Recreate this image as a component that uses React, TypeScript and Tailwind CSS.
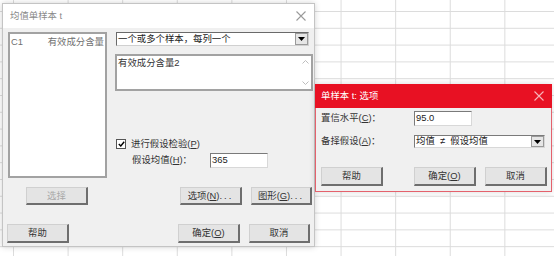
import React from "react";

const font = "font-['Liberation_Sans','Noto_Sans_CJK_SC',sans-serif]";

function Btn({
  children,
  w = "w-[62px]",
  h = "h-[19px]",
  disabled = false,
}: {
  children: React.ReactNode;
  w?: string;
  h?: string;
  disabled?: boolean;
}) {
  return (
    <div
      className={`${w} ${h} flex items-center justify-center border-t border-l border-[#d0d0d0] border-r-2 border-b-2 border-r-[#6e6e6e] border-b-[#6e6e6e] bg-[#e4e4e4] text-[9.4px] leading-none ${
        disabled ? "text-[#a8a8a8]" : "text-[#333]"
      }`}
    >
      {children}
    </div>
  );
}

function Arrow() {
  return (
    <div className="flex h-full w-[13px] items-center justify-center border border-[#9a9a9a] bg-[#e6e6e6]">
      <svg width="7" height="4" viewBox="0 0 7 4">
        <path d="M0 0h7L3.5 4z" fill="#000" />
      </svg>
    </div>
  );
}

function CloseX({ color }: { color: string }) {
  return (
    <svg width="10" height="10" viewBox="0 0 10 10">
      <path d="M0.5 0.5L9.5 9.5M9.5 0.5L0.5 9.5" stroke={color} strokeWidth="1.1" />
    </svg>
  );
}

export default function App() {
  return (
    <div
      className={`relative h-[256px] w-[554px] overflow-hidden bg-white bg-[linear-gradient(to_right,#dcdcdc_1px,transparent_1px),linear-gradient(to_bottom,#dcdcdc_1px,transparent_1px)] bg-size-[54.6px_16.8px] bg-position-[13px_11px] ${font}`}
    >
      {/* main dialog */}
      <div className="absolute left-[2px] top-[3px] flex w-[313px] flex-col border border-[#c4c4c4] bg-[#f0f0f0] shadow-[0_0_6px_rgba(0,0,0,0.18)]">
        <div className="flex h-[24px] items-center justify-between bg-white pl-[7px] pr-[8px]">
          <span className="text-[9.4px] text-[#8a8a8a]">均值单样本 t</span>
          <CloseX color="#9a9a9a" />
        </div>
        <div className="flex flex-col pb-[3px] pl-[5px] pt-[4px]">
          <div className="flex">
            <div className="flex flex-col">
              <div className="flex h-[146px] w-[99px] items-start justify-between border-2 border-[#a2a2a2] bg-white px-[1px] pt-[2px] text-[9.4px] leading-[12px] text-[#707070]">
                <span>C1</span>
                <span>有效成分含量</span>
              </div>
              <div className="ml-[18px] mt-[9px]">
                <Btn w="w-[62px]" h="h-[18px]" disabled>
                  选择
                </Btn>
              </div>
            </div>
            <div className="ml-[8px] flex w-[198px] flex-col">
              <div className="ml-[1px] flex h-[14px] w-[193px] items-center justify-between border border-[#6a6a6a] border-r-[#d0d0d0] border-b-[#d0d0d0] bg-white pl-[1px] text-[9.4px] text-[#222]">
                <span>一个或多个样本，每列一个</span>
                <Arrow />
              </div>
              <div className="mt-[8px] flex h-[37px] w-[198px] border-2 border-[#a2a2a2] bg-white">
                <div className="flex-1 pl-[1px] pt-[1px] text-[9.4px] leading-[12px] text-[#333]">有效成分含量2</div>
                <div className="flex w-[12px] flex-col items-center justify-between py-[4px]">
                  <svg width="7" height="4" viewBox="0 0 7 4">
                    <path d="M0.5 3.5L3.5 0.5L6.5 3.5" fill="none" stroke="#bdbdbd" />
                  </svg>
                  <svg width="7" height="4" viewBox="0 0 7 4">
                    <path d="M0.5 0.5L3.5 3.5L6.5 0.5" fill="none" stroke="#bdbdbd" />
                  </svg>
                </div>
              </div>
              <div className="ml-[1px] mt-[47px] flex h-[12px] items-center text-[9.4px] text-[#333]">
                <div className="flex h-[10px] w-[10px] items-center justify-center border border-[#555] bg-white">
                  <svg width="7" height="6" viewBox="0 0 7 6">
                    <path d="M0.8 3L2.8 5L6.2 0.8" fill="none" stroke="#000" strokeWidth="1.4" />
                  </svg>
                </div>
                <span className="ml-[5px]">
                  进行假设检验(<u>P</u>)
                </span>
              </div>
              <div className="mt-[3px] flex h-[15px] items-center text-[9.4px] text-[#333]">
                <span className="ml-[17px] w-[78px]">
                  假设均值(<u>H</u>)：
                </span>
                <div className="flex h-[15px] w-[58px] items-center border border-[#7a7a7a] border-r-[#d8d8d8] border-b-[#d8d8d8] bg-white pl-[1px] text-[9.4px] text-[#222]">
                  365
                </div>
              </div>
              <div className="mt-[19px] flex justify-end gap-[9px] pr-[1px]">
                <Btn h="h-[18px]">
                  选项(<u>N</u>)<span className="tracking-[2px]">...</span>
                </Btn>
                <Btn w="w-[61px]" h="h-[18px]">
                  图形(<u>G</u>)<span className="tracking-[2px]">...</span>
                </Btn>
              </div>
            </div>
          </div>
          <div className="mt-[19px] flex items-center pr-[4px]">
            <div className="-ml-[1px]">
              <Btn>帮助</Btn>
            </div>
            <div className="ml-auto flex gap-[9px]">
              <Btn>
                确定(<u>O</u>)
              </Btn>
              <Btn w="w-[61px]">取消</Btn>
            </div>
          </div>
        </div>
      </div>

      {/* options dialog */}
      <div className="absolute left-[315px] top-[84px] flex w-[237px] flex-col border border-[#e4616c] bg-[#f0f0f0] shadow-[0_0_6px_rgba(0,0,0,0.15)]">
        <div className="-mx-px -mt-px flex h-[24px] items-center justify-between bg-[#e81123] pl-[6px] pr-[8px]">
          <span className="text-[9.4px] text-white">单样本 t: 选项</span>
          <CloseX color="#f7b4ba" />
        </div>
        <div className="flex flex-col pb-[5px] pl-[5px] pr-[4px] pt-[3px] text-[9.4px] text-[#333]">
          <div className="flex h-[15px] items-center">
            <span className="w-[93px]">
              置信水平(<u>C</u>)：
            </span>
            <div className="flex h-[15px] w-[58px] items-center border border-[#7a7a7a] border-r-[#d8d8d8] border-b-[#d8d8d8] bg-white pl-[1px] text-[#222]">
              95.0
            </div>
          </div>
          <div className="mt-[9px] flex h-[13px] items-center">
            <span className="w-[93px]">
              备择假设(<u>A</u>)：
            </span>
            <div className="flex h-[13px] w-[131px] items-center justify-between border border-[#7a7a7a] border-r-[#d8d8d8] border-b-[#d8d8d8] bg-white pl-[1px] text-[#222]">
              <span className="whitespace-pre">均值  ≠  假设均值</span>
              <Arrow />
            </div>
          </div>
          <div className="mt-[19px] flex items-center">
            <Btn>帮助</Btn>
            <div className="ml-auto flex gap-[9px]">
              <Btn>
                确定(<u>O</u>)
              </Btn>
              <Btn>取消</Btn>
            </div>
          </div>
        </div>
      </div>
    </div>
  );
}
